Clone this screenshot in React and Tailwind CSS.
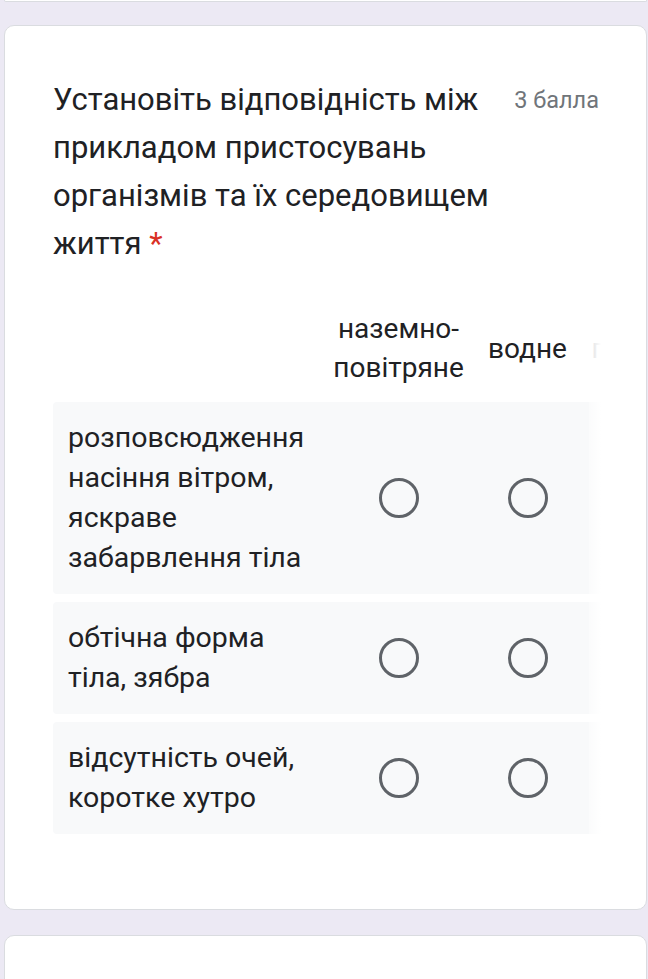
import React from "react";

const columns = ["наземно-повітряне", "водне", "грунтове"];

const rows = [
  "розповсюдження насіння вітром, яскраве забарвлення тіла",
  "обтічна форма тіла, зябра",
  "відсутність очей, коротке хутро",
];

const Radio = () => (
  <div className="w-[40px] h-[40px] rounded-full border-[3.5px] border-[#5f6368]" />
);

const GridQuestion = () => (
  <div className="relative mt-[35px] w-[548px] overflow-hidden">
    <div className="w-[720px]">
      <div className="flex items-center h-[90px]">
        <div className="w-[281px] shrink-0" />
        {columns.map((c, i) => (
          <div key={c} className="w-[129px] shrink-0 flex justify-center">
            <div
              className={`w-[136px] shrink-0 text-[28px] leading-[39px] ${
                i === 2 ? "text-left pl-[3px] text-[#bdc1c6]" : "text-center text-[#202124]"
              }`}
            >
              {c}
            </div>
          </div>
        ))}
      </div>
      <div className="flex flex-col gap-[8px] mt-[9px]">
        {rows.map((r) => (
          <div key={r} className="flex items-center bg-[#f8f9fa] rounded-[4px] py-[16px]">
            <div className="w-[281px] shrink-0 pl-[15px] pr-[14px] text-[28.5px] leading-[40px] text-[#202124]">
              {r}
            </div>
            {columns.map((c) => (
              <div key={c} className="w-[129px] shrink-0 flex justify-center">
                <Radio />
              </div>
            ))}
          </div>
        ))}
      </div>
    </div>
    <div className="absolute top-0 right-0 bottom-0 w-[12px] bg-gradient-to-l from-white to-white/40" />
  </div>
);

export default function App() {
  return (
    <div
      className="w-[648px] h-[979px] overflow-hidden bg-[#ece9f4]"
      style={{ fontFamily: "Roboto, 'Noto Sans', sans-serif" }}
    >
      <div className="ml-[4px] mr-px h-[2px] bg-white border-b border-x border-[#dadce0] rounded-b-[6px]" />
      <div className="mt-[23px] ml-[4px] mr-px h-[885px] bg-white border border-[#dadce0] rounded-[10px] pt-[50px] pl-[48px] pr-[47px]">
        <div className="flex items-start gap-[12px]">
          <div className="flex-1 text-[31px] leading-[48px] text-[#202124]">
            Установіть відповідність між прикладом пристосувань організмів та
            їх середовищем життя <span className="text-[#d93025]">*</span>
          </div>
          <div className="shrink-0 pt-[2px] text-[23.5px] leading-[44px] text-[#70757a]">
            3 балла
          </div>
        </div>
        <GridQuestion />
      </div>
      <div className="mt-[25px] ml-[4px] mr-px h-[80px] bg-white border border-[#dadce0] rounded-[10px]" />
    </div>
  );
}
